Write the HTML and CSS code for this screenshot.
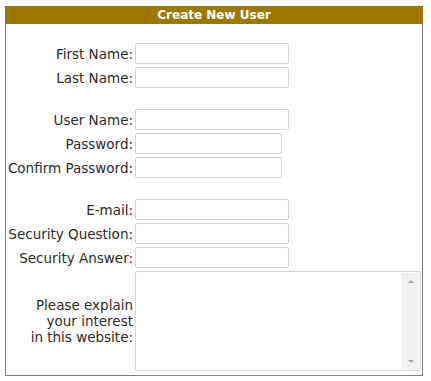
FILE: index.html
```html
<!DOCTYPE html>
<html lang="en">
<head>
    <meta charset="UTF-8">
    <title>Create New User</title>
    <link rel="stylesheet" href="styles.css">
</head>
<body>
    <div class="wizard">
        <div class="wizard-title">Create New User</div>
        <form class="user-form">
            <label for="firstName">First Name:</label>
            <input type="text" id="firstName" class="wide">
            <label for="lastName">Last Name:</label>
            <input type="text" id="lastName" class="wide">

            <div class="spacer"></div>

            <label for="userName">User Name:</label>
            <input type="text" id="userName" class="wide">
            <label for="password">Password:</label>
            <input type="password" id="password" class="narrow">
            <label for="confirmPassword">Confirm Password:</label>
            <input type="password" id="confirmPassword" class="narrow">

            <div class="spacer"></div>

            <label for="email">E-mail:</label>
            <input type="text" id="email" class="wide">
            <label for="question">Security Question:</label>
            <input type="text" id="question" class="wide">
            <label for="answer">Security Answer:</label>
            <input type="text" id="answer" class="wide">
            <label for="interest">Please explain<br>your interest<br>in this website:</label>
            <div class="memo">
                <textarea id="interest"></textarea>
                <div class="scrollbar">
                    <span class="arrow up"></span>
                    <span class="arrow down"></span>
                </div>
            </div>
        </form>
    </div>
</body>
</html>
```

FILE: styles.css
```css
body {
    margin: 0;
    font-family: Verdana, "DejaVu Sans", sans-serif;
    font-size: 13.5px;
    color: #2b2b2b;
}

.wizard {
    margin: 6px 0 0 5px;
    width: 416px;
    height: 369px;
    border: 1px solid #808080;
    border-top: none;
}

.wizard-title {
    background-color: #9e7700;
    color: #fff;
    font-weight: bold;
    font-size: 12px;
    text-align: center;
    height: 18px;
    line-height: 18px;
    margin: 0 -1px;
}

.user-form {
    display: grid;
    grid-template-columns: 126px auto;
    column-gap: 2px;
    row-gap: 3px;
    align-items: center;
    justify-items: start;
    padding: 19px 0 0 1px;
}

.user-form label {
    justify-self: end;
    text-align: right;
    line-height: 16px;
}

.spacer {
    grid-column: 1 / 3;
    height: 15px;
}

.user-form input {
    box-sizing: border-box;
    height: 21px;
    margin: 0;
    border: 1px solid #d4d4d4;
    border-radius: 2px;
    font-family: inherit;
    font-size: 13px;
}

.wide {
    width: 154px;
}

.narrow {
    width: 147px;
}

.memo {
    display: flex;
    box-sizing: border-box;
    width: 286px;
    height: 100px;
    border: 1px solid #d4d4d4;
    border-radius: 2px;
    padding: 1px 1px 1px 0;
}

.memo textarea {
    flex: 1;
    margin: 0;
    border: none;
    outline: none;
    resize: none;
    font-family: inherit;
    font-size: 13px;
}

.scrollbar {
    width: 17px;
    background-color: #f0f0f0;
    display: flex;
    flex-direction: column;
    justify-content: space-between;
    align-items: center;
    padding: 7px 0 6px;
}

.arrow {
    width: 0;
    height: 0;
    border-left: 3px solid transparent;
    border-right: 3px solid transparent;
}

.arrow.up {
    border-bottom: 3px solid #a3a3a3;
}

.arrow.down {
    border-top: 3px solid #a3a3a3;
}
```
